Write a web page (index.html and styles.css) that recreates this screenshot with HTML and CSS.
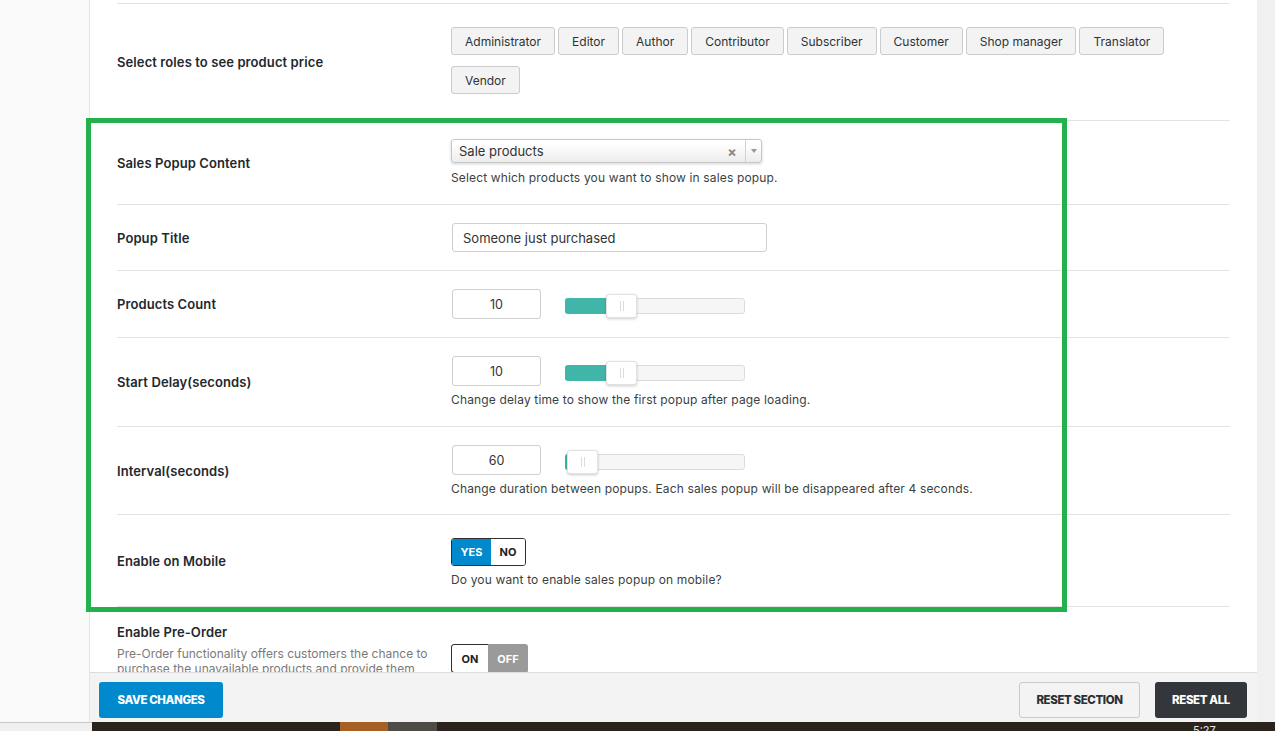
FILE: index.html
```html
<!DOCTYPE html>
<html>
<head>
<meta charset="utf-8">
<link rel="stylesheet" href="styles.css">
</head>
<body>
<div class="screen">
  <aside class="sidebar"></aside>
  <main class="main">
    <div class="content">
      <div class="row roles-row">
        <div class="label">Select roles to see product price</div>
        <div class="control">
          <div class="roles">
            <span class="role">Administrator</span>
            <span class="role">Editor</span>
            <span class="role">Author</span>
            <span class="role">Contributor</span>
            <span class="role">Subscriber</span>
            <span class="role">Customer</span>
            <span class="role">Shop manager</span>
            <span class="role">Translator</span>
            <span class="role">Vendor</span>
          </div>
        </div>
      </div>

      <div class="row sales-row">
        <div class="label">Sales Popup Content</div>
        <div class="control">
          <div class="select">
            <span class="select-text">Sale products</span>
            <span class="select-clear">&times;</span>
            <span class="select-arrow"><span class="caret"></span></span>
          </div>
          <div class="desc">Select which products you want to show in sales popup.</div>
        </div>
      </div>

      <div class="row">
        <div class="label">Popup Title</div>
        <div class="control">
          <div class="text-input">Someone just purchased</div>
        </div>
      </div>

      <div class="row">
        <div class="label">Products Count</div>
        <div class="control">
          <div class="slider-line">
            <div class="num-input">10</div>
            <div class="track">
              <div class="fill" style="width:45px"></div>
              <div class="handle" style="left:40px"><i></i><i></i></div>
            </div>
          </div>
        </div>
      </div>

      <div class="row">
        <div class="label">Start Delay(seconds)</div>
        <div class="control">
          <div class="slider-line">
            <div class="num-input">10</div>
            <div class="track">
              <div class="fill" style="width:45px"></div>
              <div class="handle" style="left:40px"><i></i><i></i></div>
            </div>
          </div>
          <div class="desc">Change delay time to show the first popup after page loading.</div>
        </div>
      </div>

      <div class="row interval-row">
        <div class="label">Interval(seconds)</div>
        <div class="control">
          <div class="slider-line">
            <div class="num-input">60</div>
            <div class="track">
              <div class="fill" style="width:4px"></div>
              <div class="handle" style="left:1px"><i></i><i></i></div>
            </div>
          </div>
          <div class="desc">Change duration between popups. Each sales popup will be disappeared after 4 seconds.</div>
        </div>
      </div>

      <div class="row">
        <div class="label">Enable on Mobile</div>
        <div class="control">
          <div class="switch yesno">
            <span class="sw-on">YES</span><span class="sw-off">NO</span>
          </div>
          <div class="desc">Do you want to enable sales popup on mobile?</div>
        </div>
      </div>

      <div class="row preorder">
        <div class="label-block">
          <div class="label">Enable Pre-Order</div>
          <div class="sub">Pre-Order functionality offers customers the chance to purchase the unavailable products and provide them when they are back in stock.</div>
        </div>
        <div class="control">
          <div class="switch onoff">
            <span class="sw-a">ON</span><span class="sw-b">OFF</span>
          </div>
        </div>
      </div>
    </div>
    <footer class="footer">
      <button class="btn btn-save">SAVE CHANGES</button>
      <div class="footer-right">
        <button class="btn btn-reset-section">RESET SECTION</button>
        <button class="btn btn-reset-all">RESET ALL</button>
      </div>
    </footer>
  </main>
  <div class="right-strip"></div>
  <div class="taskbar">
    <div class="tb-left"></div>
    <div class="tb-dark">
      <span class="tb-gap1"></span>
      <span class="tb-orange"></span>
      <span class="tb-gray"></span>
      <span class="tb-fill"></span>
      <span class="tb-time">5:27</span>
    </div>
  </div>
  <div class="highlight"></div>
</div>
</body>
</html>
```

FILE: styles.css
```css
* { box-sizing: border-box; }
html, body { margin: 0; padding: 0; }
body {
  width: 1275px;
  height: 731px;
  overflow: hidden;
  font-family: "Inter", "Open Sans", sans-serif;
  color: #23282d;
  background: #fff;
}
.screen {
  position: relative;
  display: grid;
  grid-template-columns: 90px 1167px 18px;
  grid-template-rows: 722px 9px;
  width: 1275px;
  height: 731px;
}
.sidebar {
  background: #f9f9f9;
  border-right: 1px solid #e5e5e5;
}
.main {
  background: #fff;
  display: flex;
  flex-direction: column;
  overflow: hidden;
}
.right-strip { background: #f0f0f0; }

.content {
  flex: 1;
  overflow: hidden;
  padding: 3px 27px 0 27px;
}
.row {
  display: grid;
  grid-template-columns: 334px 1fr;
  align-items: center;
  padding: 18px 0;
  border-top: 1px solid #e3e3e3;
}
.label {
  font-size: 13px;
  font-weight: 600;
  color: #23282d;
  letter-spacing: 0.1px;
}
.desc {
  font-size: 12px;
  line-height: 16px;
  color: #3a3f44;
  margin-top: 6px;
  letter-spacing: 0.15px;
}
.sales-row .desc { line-height: 17px; margin-top: 6px; }
.interval-row { padding-bottom: 17px; }

/* roles */
.roles-row { padding: 18px 0 19px; }
.roles {
  display: flex;
  flex-wrap: wrap;
  column-gap: 3px;
  row-gap: 11px;
  max-width: 720px;
  padding: 5px 0 7px;
}
.role {
  display: inline-flex;
  align-items: center;
  height: 28px;
  padding: 0 13px;
  border: 1px solid #cbcbcb;
  border-radius: 3px;
  background: #f3f3f3;
  font-size: 12px;
  color: #2c3338;
}

/* select */
.select {
  display: flex;
  align-items: center;
  width: 311px;
  height: 24px;
  border: 1px solid #c8c8c8;
  border-radius: 3px;
  background: linear-gradient(#ffffff 20%, #ececec 100%);
  box-shadow: 0 1px 3px rgba(0,0,0,0.18);
  font-size: 13px;
  color: #333;
}
.select-text { flex: 1; padding-left: 7px; }
.select-clear {
  width: 16px;
  font-size: 14px;
  font-weight: 700;
  color: #8a8a8a;
  text-align: center;
  margin-right: 5px;
}
.select-arrow {
  width: 16px;
  height: 22px;
  border-left: 1px solid #d2d2d2;
  display: flex;
  align-items: center;
  justify-content: center;
}
.caret {
  width: 0; height: 0;
  border-left: 3px solid transparent;
  border-right: 3px solid transparent;
  border-top: 4px solid #999;
}

/* inputs */
.text-input {
  width: 315px;
  height: 29px;
  margin-left: 1px;
  border: 1px solid #cfcfcf;
  border-radius: 3px;
  padding: 0 10px;
  display: flex;
  align-items: center;
  font-size: 13px;
  color: #333;
}
.slider-line {
  display: flex;
  align-items: center;
  gap: 24px;
}
.num-input {
  width: 89px;
  height: 30px;
  margin-left: 1px;
  border: 1px solid #cfcfcf;
  border-radius: 3px;
  display: flex;
  align-items: center;
  justify-content: center;
  font-size: 12.5px;
  color: #333;
}
.track {
  position: relative;
  width: 180px;
  height: 16px;
  margin-top: 3px;
  border: 1px solid #dcdcdc;
  border-radius: 3px;
  background: #f6f6f6;
}
.fill {
  position: absolute;
  left: -1px; top: -1px; bottom: -1px;
  background: #3fb6a8;
  border-radius: 3px 0 0 3px;
}
.handle {
  position: absolute;
  top: -5px;
  width: 31px;
  height: 24px;
  background: #fff;
  border: 1px solid #e2e2e2;
  border-radius: 3px;
  box-shadow: 0 1px 3px rgba(0,0,0,0.2);
  display: flex;
  justify-content: center;
  align-items: center;
  gap: 2px;
}
.handle i {
  display: block;
  width: 1px;
  height: 10px;
  background: #dcdcdc;
}

/* switches */
.control {
  justify-self: start;
  display: flex;
  flex-direction: column;
  align-items: flex-start;
}
.switch {
  display: inline-flex;
  height: 28px;
  font-size: 11px;
  font-weight: 700;
  border-radius: 3px;
  overflow: hidden;
}
.yesno { margin-top: 5px; border: 1px solid #2f2f2f; width: 75px; }
.yesno .sw-on {
  background: #0089cc;
  color: #fff;
  width: 39px;
  display: flex; align-items: center; justify-content: center;
}
.yesno .sw-off {
  background: #fff;
  color: #222;
  flex: 1;
  display: flex; align-items: center; justify-content: center;
}

.preorder {
  align-items: start;
  padding-top: 17px;
}
.label-block { width: 322px; }
.sub {
  font-size: 12px;
  line-height: 15px;
  color: #7a7a7a;
  margin-top: 6px;
}
.onoff { margin-top: 20px; width: 77px; height: 29px; }
.onoff .sw-a {
  background: #fff;
  color: #222;
  border: 1px solid #2f2f2f;
  border-right: none;
  border-radius: 3px 0 0 3px;
  width: 37px;
  display: flex; align-items: center; justify-content: center;
}
.onoff .sw-b {
  background: #9a9a9a;
  color: #fff;
  flex: 1;
  display: flex; align-items: center; justify-content: center;
}

/* footer */
.footer {
  height: 50px;
  flex: none;
  background: #f3f3f3;
  border-top: 1px solid #dcdcdc;
  display: flex;
  justify-content: space-between;
  align-items: flex-start;
  padding: 9px 10px 0 9px;
}
.footer-right { display: flex; gap: 15px; }
.btn {
  height: 36px;
  border-radius: 3px;
  font-family: "Inter", sans-serif;
  font-size: 11.5px;
  font-weight: 800;
  letter-spacing: -0.4px;
  cursor: pointer;
}
.btn-save {
  width: 124px;
  background: #0089cc;
  color: #fff;
  border: none;
}
.btn-reset-section {
  width: 121px;
  background: #f3f3f3;
  color: #2b2f33;
  border: 1px solid #c9c9c9;
}
.btn-reset-all {
  width: 92px;
  background: #33363a;
  color: #fff;
  border: none;
}

/* taskbar */
.taskbar {
  grid-column: 1 / 4;
  display: flex;
  height: 9px;
  overflow: hidden;
}
.tb-left {
  width: 92px;
  background: #f0f0f0;
  border-top: 1px solid #c8c8c8;
}
.tb-dark {
  flex: 1;
  display: flex;
  background: #2a241c;
  position: relative;
}
.tb-gap1 { width: 248px; }
.tb-orange { width: 48px; background: #a65f24; }
.tb-gray { width: 49px; background: #4e4c47; }
.tb-fill { flex: 1; }
.tb-time {
  position: absolute;
  left: 1101px;
  top: 3px;
  font-size: 11px;
  line-height: 11px;
  color: #e8e8e8;
}

.highlight {
  position: absolute;
  left: 86px;
  top: 118px;
  width: 981px;
  height: 494px;
  border: 5px solid #22b14c;
  pointer-events: none;
}
```
